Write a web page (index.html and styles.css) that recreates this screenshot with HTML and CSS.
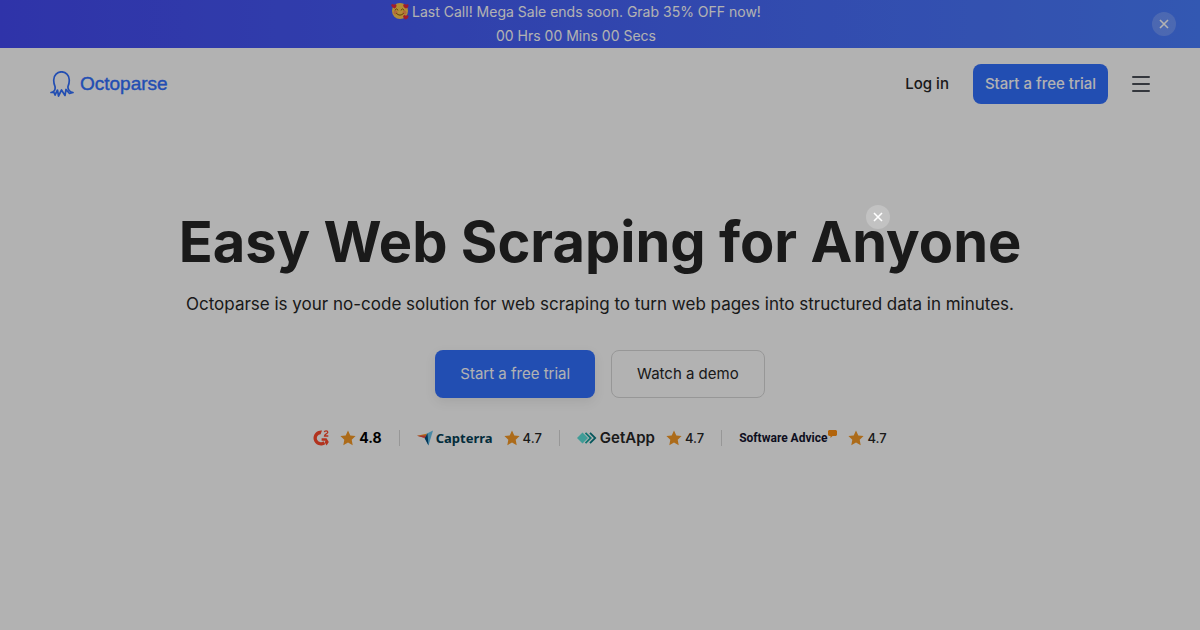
FILE: index.html
```html
<!DOCTYPE html>
<html lang="en">
<head>
  <meta charset="UTF-8" />
  <meta name="viewport" content="width=device-width, initial-scale=1.0"/>
  <title>Octoparse - Easy Web Scraping for Anyone</title>
  <link rel="stylesheet" href="styles.css">
</head>
<body>

  <div class="promo">
    <div class="promo-text">
      <p>
        <svg class="emoji" viewBox="0 0 36 36" aria-hidden="true">
          <circle cx="18" cy="18" r="16" fill="#ffcc4d"/>
          <circle cx="9" cy="21" r="4" fill="#ff9a55"/>
          <circle cx="27" cy="21" r="4" fill="#ff9a55"/>
          <path d="M8 16q3-5 6 0M20 16q3-5 6 0M11 23q7 7 14 0" fill="none" stroke="#8a5a10" stroke-width="2" stroke-linecap="round"/>
          <path d="M30 13c-4-2-7-5-5-8 2-2 4-1 5 1 1-2 5-2 5 1s-2 5-5 6zM7 13C3 11-1 8 1 5c2-2 4-1 5 1 1-2 5-2 5 1s-2 5-4 6zM29 35c-4-2-6-6-4-8 2-2 4-1 5 1 1-2 5-2 5 1s-3 5-6 6z" fill="#e8293f"/>
        </svg>
        Last Call! Mega Sale ends soon. Grab 35% OFF now!
      </p>
      <p>00 Hrs 00 Mins 00 Secs</p>
    </div>
    <button class="close" aria-label="Close banner">
      <svg viewBox="0 0 24 24"><path d="M8 8l8 8M16 8l-8 8"/></svg>
    </button>
  </div>

  <header class="header">
    <a class="logo" href="#">
      <svg viewBox="0 0 24 26" aria-hidden="true">
        <path d="M1 21.500C4 21 5.500 18.500 5 15.500 4 13 3.500 11 3.800 8.500a7.700 7.700 0 0 1 15.400 0c.300 2.500-.200 4.500-1.200 7-.500 3 2 5.500 5 6l-3.500 1-3.500-4-1 6-3.500-5.500L8.500 25l-1-6L5 24l-1-2.500z"/>
      </svg>
      <span>Octoparse</span>
    </a>
    <nav class="nav">
      <a class="login" href="#">Log in</a>
      <a class="btn btn-small" href="#">Start a free trial</a>
      <button class="menu" aria-label="Menu">
        <svg viewBox="0 0 18 18"><path d="M1 2h16M1 9h16M1 16h16"/></svg>
      </button>
    </nav>
  </header>

  <main class="hero">
    <h1>Easy Web Scraping for Anyone</h1>
    <p class="intro">Octoparse is your no-code solution for web scraping to turn web pages into structured data in minutes.</p>
    <div class="actions">
      <a class="btn btn-large" href="#">Start a free trial</a>
      <a class="btn btn-outline" href="#">Watch a demo</a>
    </div>

    <ul class="ratings">
      <li>
        <svg class="g2" viewBox="0 0 16 16" role="img" aria-label="G2">
          <path d="M9 .6A7.500 7.500 0 1 0 12.300 14.200l-1.800-3A4 4 0 1 1 7.600 4.200z" fill="#ff492c"/>
          <path d="M8.600 8.200h4.900l2.300 3.700-2.200 3.700-2-3.400 1-1.400H8.600z" fill="#ff492c"/>
          <path d="M11.300 2.200c.3-1.800 3.500-1.700 3.500 0 0 1.500-3.200 1.800-3.300 3.800h3.800" fill="none" stroke="#ff492c" stroke-width="1.300"/>
        </svg>
        <svg class="star" viewBox="0 0 16 16"><path d="M8 .5l2.300 4.900 5.300.7-3.900 3.700 1 5.400L8 12.600l-4.700 2.600 1-5.400L.4 6.100l5.300-.7z"/></svg>
        <strong>4.8</strong>
      </li>
      <li>
        <span class="brand capterra">
          <svg viewBox="0 0 16 16" aria-hidden="true">
            <path d="M0 5.800l10.500-2.300L8.500 8z" fill="#ff9d28"/>
            <path d="M10 3.600L16 .5 11.500 15.500 8 8.500z" fill="#68c5ed"/>
            <path d="M10.500 3.500l1 12L7.500 8z" fill="#044d80"/>
            <path d="M0 5.800L7.500 8l2-2.500z" fill="#e54747"/>
          </svg>
          Capterra
        </span>
        <svg class="star" viewBox="0 0 16 16"><path d="M8 .5l2.300 4.900 5.300.7-3.900 3.700 1 5.400L8 12.600l-4.700 2.600 1-5.400L.4 6.100l5.300-.7z"/></svg>
        <span>4.7</span>
      </li>
      <li>
        <span class="brand getapp">
          <svg viewBox="0 0 20 12" aria-hidden="true">
            <path d="M0 6l5.500-5.500L11 6l-5.500 5.500z" fill="#5ce0d8"/>
            <path d="M8.500.8L13.700 6l-5.200 5.200" fill="none" stroke="#17a8a2" stroke-width="1.800"/>
            <path d="M13 .8L18.200 6 13 11.200" fill="none" stroke="#087c84" stroke-width="1.800"/>
          </svg>
          GetApp
        </span>
        <svg class="star" viewBox="0 0 16 16"><path d="M8 .5l2.300 4.900 5.300.7-3.900 3.700 1 5.400L8 12.600l-4.700 2.600 1-5.400L.4 6.100l5.300-.7z"/></svg>
        <span>4.7</span>
      </li>
      <li>
        <span class="brand advice">
          Software Advice
          <svg viewBox="0 0 9 8" aria-hidden="true"><path d="M1 0h7l1 1v4L8 6H4.500L2.500 8V6H1L0 5V1z" fill="#ff9010"/></svg>
        </span>
        <svg class="star" viewBox="0 0 16 16"><path d="M8 .5l2.300 4.900 5.300.7-3.900 3.700 1 5.400L8 12.600l-4.700 2.600 1-5.400L.4 6.100l5.300-.7z"/></svg>
        <span>4.7</span>
      </li>
    </ul>
  </main>

  <!-- popup backdrop -->
  <div class="overlay">
    <button class="close overlay-close" aria-label="Close popup">
      <svg viewBox="0 0 24 24"><path d="M8 8l8 8M16 8l-8 8"/></svg>
    </button>
  </div>

</body>
</html>
```
FILE: styles.css
```css
* {
  box-sizing: border-box;
  margin: 0;
  padding: 0;
}

body {
  min-height: 100vh;
  background: #fff;
  color: #262626;
  font-family: 'Inter', sans-serif;
  font-size: 14px;
  line-height: 24px;
}

a {
  color: inherit;
  text-decoration: none;
}

button {
  border: none;
  background: none;
  cursor: pointer;
}

svg {
  display: block;
  flex-shrink: 0;
}

.promo {
  display: flex;
  align-items: center;
  padding-right: 24px;
  background: linear-gradient(90deg, #444af2, #4a7eff);
  color: #fff;
}

.promo-text {
  flex: 1;
  text-align: center;
}

.promo-text p {
  display: flex;
  justify-content: center;
  gap: 3px;
}

.emoji {
  width: 18px;
  height: 18px;
  margin-top: 2px;
}

.close {
  width: 24px;
  height: 24px;
  border-radius: 50%;
  background: rgba(255, 255, 255, 0.2);
}

.close path {
  fill: none;
  stroke: #fff;
  stroke-width: 1.6;
}

.header {
  display: flex;
  align-items: center;
  justify-content: space-between;
  padding: 16px 50px;
}

.logo {
  display: flex;
  align-items: center;
  gap: 6px;
  color: #3270ff;
  font-family: 'Liberation Sans', sans-serif;
  font-size: 19px;
}

.logo span {
  -webkit-text-stroke: 0.4px #3270ff;
}

.logo svg {
  width: 24px;
  height: 26px;
}

.logo path {
  fill: none;
  stroke: #3270ff;
  stroke-width: 1.7;
  stroke-linejoin: round;
}

.nav {
  display: flex;
  align-items: center;
  gap: 24px;
  font-size: 15px;
  font-weight: 500;
}

.btn {
  border-radius: 8px;
  background: #3270ff;
  color: #fff;
}

.btn-small {
  padding: 8px 12px;
}

.menu svg {
  width: 18px;
  height: 18px;
}

.menu path {
  stroke: #4b4f58;
  stroke-width: 2;
  stroke-linecap: round;
}

.hero {
  padding: 86px 24px 24px;
  text-align: center;
}

h1 {
  font-size: 56px;
  font-weight: 700;
  line-height: 72px;
}

.intro {
  margin-top: 12px;
  font-size: 17px;
  line-height: 28px;
}

.actions {
  display: flex;
  justify-content: center;
  gap: 16px;
  margin-top: 32px;
  font-size: 15px;
}

.btn-large {
  padding: 12px 25px;
  box-shadow: 0 4px 12px rgba(0, 0, 0, 0.08);
}

.btn-outline {
  padding: 11px 25px;
  border: 1px solid #d9d9d9;
  background: none;
  color: #262626;
}

.ratings {
  display: flex;
  justify-content: center;
  align-items: center;
  margin-top: 32px;
  list-style: none;
  font-size: 13px;
  line-height: 16px;
}

.ratings li {
  display: flex;
  align-items: center;
  padding: 0 17px;
  font-weight: 500;
}

.ratings li + li {
  border-left: 1px solid #d9d9d9;
}

.ratings strong {
  color: #000;
  font-size: 14px;
  font-weight: 700;
}

.star {
  width: 16px;
  height: 16px;
  margin: 0 3px 0 11px;
}

.star path {
  fill: #f79a26;
}

.g2 {
  width: 16px;
  height: 16px;
}

.brand {
  display: flex;
  align-items: center;
  gap: 3px;
  font-weight: 700;
}

.capterra {
  color: #044055;
  font-family: 'Noto Sans', sans-serif;
}

.capterra svg {
  width: 16px;
  height: 16px;
}

.getapp {
  font-size: 15px;
  font-weight: 600;
}

.getapp svg {
  width: 20px;
  height: 12px;
}

.advice {
  align-items: flex-start;
  gap: 1px;
  color: #14142e;
  font-family: 'Roboto', sans-serif;
  font-size: 12px;
}

.advice svg {
  width: 9px;
  height: 8px;
}

.overlay {
  position: fixed;
  inset: 0;
  background: rgba(0, 0, 0, 0.3);
}

.overlay-close {
  position: absolute;
  top: 205px;
  left: calc(50% + 266px);
}
```
